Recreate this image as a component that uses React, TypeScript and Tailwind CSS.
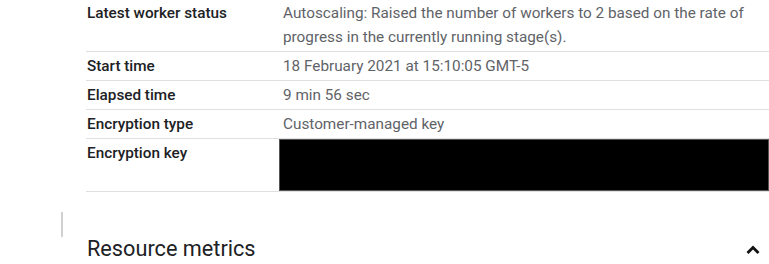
import React from 'react';

const rows = [
  {
    label: 'Latest worker status',
    value:
      'Autoscaling: Raised the number of workers to 2 based on the rate of progress in the currently running stage(s).',
  },
  { label: 'Start time', value: '18 February 2021 at 15:10:05 GMT-5' },
  { label: 'Elapsed time', value: '9 min 56 sec' },
  { label: 'Encryption type', value: 'Customer-managed key' },
];

const ExpandLess = () => (
  <svg viewBox="0 0 24 24" className="h-6 w-6 shrink-0" fill="none" stroke="#111" strokeWidth={2.8}>
    <polyline points="6.5,16 12,10.5 17.5,16" />
  </svg>
);

export default function App() {
  return (
    <div className="h-[264px] w-[769px] overflow-hidden bg-white font-['Roboto',sans-serif] text-[15.3px]">
      {/* job info table */}
      <div className="-mt-px pl-[86px]">
        {rows.map((row) => (
          <div key={row.label} className="flex border-b border-[#e0e0e0]">
            <div className="w-[193px] shrink-0 py-[2px] pl-px font-medium leading-6 text-[#202124]">
              {row.label}
            </div>
            <div className="flex-1 py-[2px] pl-1 pr-4 leading-6 text-[#5f6368]">{row.value}</div>
          </div>
        ))}
        <div className="flex border-b border-[#e0e0e0]">
          <div className="w-[193px] shrink-0 py-[2px] pl-px font-medium leading-6 text-[#202124]">
            Encryption key
          </div>
          <div className="h-[52px] flex-1 border border-[#555] bg-black" />
        </div>
      </div>

      {/* section divider */}
      <div className="ml-[61px] mt-5 h-[25px] w-[2px] bg-[#d0d0d0]" />

      <div className="flex items-center justify-between pl-[87px] pr-[4px]">
        <h2 className="text-[21.7px] leading-6 text-[#202124]">Resource metrics</h2>
        <ExpandLess />
      </div>
    </div>
  );
}
